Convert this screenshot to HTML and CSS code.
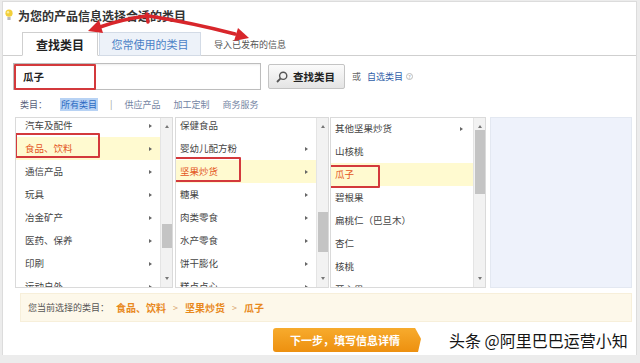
FILE: index.html
```html
<!DOCTYPE html>
<html lang="zh-CN">
<head>
    <meta charset="UTF-8">
    <title>选择类目</title>
    <link rel="stylesheet" href="styles.css">
</head>
<body>
    <div class="page">
        <h2 class="title">
            <svg class="bulb" width="8" height="12" viewBox="0 0 8 12">
                <circle cx="4" cy="4.2" r="3.6" fill="#f2cf3a"/>
                <circle cx="3" cy="3.2" r="1.2" fill="#fbeea0"/>
                <rect x="2.4" y="8" width="3.2" height="3" fill="#b9b9b9"/>
            </svg>
            为您的产品信息选择合适的类目
        </h2>

        <div class="tabs">
            <a class="tab active">查找类目</a>
            <a class="tab common">您常使用的类目</a>
            <a class="tab plain">导入已发布的信息</a>
        </div>

        <div class="search">
            <div class="input"><span class="mark mark-search">瓜子</span></div>
            <button class="find">
                <svg width="12" height="12" viewBox="0 0 12 12">
                    <circle cx="7.2" cy="4.8" r="3.6" fill="none" stroke="#555" stroke-width="1.4"/>
                    <line x1="4.6" y1="7.4" x2="1" y2="11" stroke="#555" stroke-width="1.8"/>
                </svg>
                查找类目
            </button>
            <span class="or">或</span>
            <a class="self">自选类目</a>
            <span class="help">?</span>
        </div>

        <div class="filters">
            <span>类目：</span>
            <span class="opt sel">所有类目</span>
            <span class="sep">|</span>
            <span class="opt">供应产品</span>
            <span class="opt">加工定制</span>
            <span class="opt">商务服务</span>
        </div>

        <div class="cols">
            <div class="col col-1">
                <div class="list">
                    <ul>
                        <li>汽车及配件<i></i></li>
                        <li class="on"><span class="mark mark-1">食品、饮料</span><i></i></li>
                        <li>通信产品<i></i></li>
                        <li>玩具<i></i></li>
                        <li>冶金矿产<i></i></li>
                        <li>医药、保养<i></i></li>
                        <li>印刷<i></i></li>
                        <li>运动户外<i></i></li>
                    </ul>
                </div>
                <div class="sb">
                    <b class="up"></b>
                    <div class="track"><div class="thumb thumb-1"></div></div>
                    <b class="down"></b>
                </div>
            </div>

            <div class="col col-2">
                <div class="list">
                    <ul>
                        <li>保健食品</li>
                        <li>婴幼儿配方粉<i></i></li>
                        <li class="on"><span class="mark mark-2">坚果炒货</span><i></i></li>
                        <li>糖果<i></i></li>
                        <li>肉类零食<i></i></li>
                        <li>水产零食<i></i></li>
                        <li>饼干膨化<i></i></li>
                        <li>糕点点心<i></i></li>
                    </ul>
                </div>
                <div class="sb">
                    <b class="up"></b>
                    <div class="track"><div class="thumb thumb-2"></div></div>
                    <b class="down"></b>
                </div>
            </div>

            <div class="col col-3">
                <div class="list">
                    <ul>
                        <li>其他坚果炒货<i></i></li>
                        <li>山核桃</li>
                        <li class="on"><span class="mark mark-3">瓜子</span></li>
                        <li>碧根果</li>
                        <li>扁桃仁（巴旦木）</li>
                        <li>杏仁</li>
                        <li>核桃</li>
                        <li>开心果</li>
                    </ul>
                </div>
                <div class="sb">
                    <b class="up"></b>
                    <div class="track"><div class="thumb thumb-3"></div></div>
                    <b class="down"></b>
                </div>
            </div>

            <div class="blank"></div>
        </div>

        <div class="path">
            <span class="label">您当前选择的类目：</span>
            <span class="crumb">食品、饮料</span>
            <span class="gt">&gt;</span>
            <span class="crumb">坚果炒货</span>
            <span class="gt">&gt;</span>
            <span class="crumb">瓜子</span>
        </div>

        <div class="actions">
            <button class="next">下一步，填写信息详情</button>
            <span class="watermark">头条 @阿里巴巴运营小知</span>
        </div>

        <!-- 标注箭头 -->
        <svg class="arrows" width="640" height="60" viewBox="0 0 640 60">
            <g stroke="#d8262b" stroke-width="3.5" stroke-linecap="round" fill="none">
                <path d="M146 15 Q122 18 99 26"/>
                <path d="M148 15 Q192 22 234 33"/>
                <path d="M146 13 L147 21"/>
            </g>
            <g fill="#d8262b">
                <polygon points="87,30 102,32 98,19"/>
                <polygon points="248,37 233,40 237,27"/>
            </g>
        </svg>
    </div>
</body>
</html>
```

FILE: styles.css
```css
* {
    box-sizing: border-box;
}

body {
    margin: 0;
    background: #ececec;
    font-family: "Noto Sans CJK SC", "Noto Sans", sans-serif;
    color: #333;
}

.page {
    position: relative;
    margin: 1px 3px 0 2px;
    height: 354px;
    background: #fff;
    border: 1px solid #dcdcdc;
    border-bottom: none;
}

.title {
    display: flex;
    align-items: center;
    gap: 5px;
    height: 20px;
    margin: 3px 0 0 2px;
    font-size: 12px;
    font-weight: bold;
    color: #333;
}

/* 选项卡 */
.tabs {
    display: flex;
    align-items: flex-end;
    height: 24px;
    margin-top: 7px;
    padding-left: 19px;
    border-bottom: 1px solid #cfcfcf;
}

.tab {
    display: flex;
    align-items: center;
    justify-content: center;
    height: 24px;
    margin-bottom: -1px;
    border: 1px solid #cfcfcf;
}

.tab.active {
    width: 76px;
    background: #fff;
    border-bottom-color: #fff;
    font-size: 12px;
    font-weight: bold;
    color: #222;
}

.tab.common {
    width: 102px;
    margin-left: 1px;
    background: #edf2f9;
    border-color: #d3dbe6;
    font-size: 11px;
    color: #4a7fc6;
}

.tab.plain {
    margin-left: 13px;
    border: none;
    font-size: 9px;
    color: #555;
}

/* 搜索 */
.search {
    display: flex;
    align-items: center;
    height: 27px;
    margin-top: 7px;
    padding-left: 10px;
}

.input {
    display: flex;
    align-items: center;
    width: 248px;
    height: 27px;
    padding-left: 9px;
    border: 1px solid #bdbdbd;
    box-shadow: inset 1px 1px 2px rgba(0, 0, 0, 0.08);
    font-size: 10.5px;
    font-weight: bold;
    color: #222;
}

.find {
    display: flex;
    align-items: center;
    gap: 5px;
    width: 77px;
    height: 25px;
    margin-left: 7px;
    padding: 0 0 0 7px;
    border: 1px solid #c4c4c4;
    border-radius: 2px;
    background: linear-gradient(#fbfbfb, #e4e4e4);
    font-family: inherit;
    font-size: 10.5px;
    font-weight: bold;
    color: #222;
}

.or {
    margin-left: 7px;
    font-size: 9px;
    color: #666;
}

.self {
    margin-left: 6px;
    font-size: 9px;
    color: #2f5ea8;
}

.help {
    display: inline-flex;
    align-items: center;
    justify-content: center;
    width: 7px;
    height: 7px;
    margin-left: 3px;
    border: 1px solid #bbb;
    border-radius: 50%;
    font-size: 5px;
    color: #999;
}

/* 类目筛选 */
.filters {
    display: flex;
    align-items: center;
    height: 14px;
    margin-top: 7px;
    padding-left: 17px;
    font-size: 9px;
    color: #56607a;
}

.filters .opt {
    margin-left: 13px;
    color: #7484a3;
}

.filters .sel {
    padding: 0 1px;
    background: #b7d2f4;
    color: #2d6bc2;
}

.filters .sep {
    margin-left: 12px;
    color: #999;
}

.filters .sep + .opt {
    margin-left: 12px;
}

/* 三级类目列表 */
.cols {
    display: flex;
    height: 171px;
    margin: 6px 4px 0 12px;
}

.col {
    display: flex;
    border: 1px solid #dadada;
    background: #fff;
}

.col-1 {
    width: 158px;
}

.col-2 {
    width: 154px;
    margin-left: 2px;
}

.col-3 {
    width: 156px;
    margin-left: 1px;
}

.list {
    flex: 1;
    overflow: hidden;
}

.list ul {
    margin: -4px 0 0;
    padding: 0;
    list-style: none;
}

.col-3 .list ul {
    margin-top: -1px;
}

.list li {
    display: flex;
    align-items: center;
    justify-content: space-between;
    height: 23px;
    padding: 0 8px 0 4px;
    font-size: 9.5px;
    line-height: 13px;
    color: #444;
    white-space: nowrap;
}

.col-1 .list li {
    padding-left: 9px;
}

.col-3 .list li {
    padding-right: 10px;
}

.list li i {
    width: 0;
    height: 0;
    border-left: 3px solid #666;
    border-top: 2px solid transparent;
    border-bottom: 2px solid transparent;
}

.list li.on {
    background: #fffad0;
    color: #e3561d;
}

/* 红色标注框 */
.mark {
    position: relative;
}

.mark::after {
    content: "";
    position: absolute;
    border: 2px solid #d3393c;
    border-radius: 1px;
}

.mark-search::after {
    top: -5px;
    bottom: -6px;
    left: -9px;
    right: -52px;
}

.mark-1::after {
    top: -9px;
    bottom: -3px;
    left: -10px;
    right: -27px;
}

.mark-2::after {
    top: -8px;
    bottom: -4px;
    left: -11px;
    right: -23px;
}

.mark-3::after {
    top: -3px;
    bottom: -7px;
    left: -9px;
    right: -26px;
}

/* 滚动条 */
.sb {
    display: flex;
    flex-direction: column;
    align-items: center;
    width: 12px;
    background: #f2f2f2;
    border-left: 1px solid #e4e4e4;
}

.sb .up,
.sb .down {
    width: 0;
    height: 0;
    margin: 7px 0;
    border-left: 2.5px solid transparent;
    border-right: 2.5px solid transparent;
}

.sb .up {
    border-bottom: 3px solid #777;
}

.sb .down {
    border-top: 3px solid #777;
}

.sb .track {
    flex: 1;
    width: 100%;
}

.thumb {
    width: 10px;
    margin-left: 1px;
    background: #c4c4c4;
}

.thumb-1 {
    height: 24px;
    margin-top: 89px;
}

.thumb-2 {
    height: 40px;
    margin-top: 77px;
}

.thumb-3 {
    height: 64px;
    margin-top: -5px;
}

.blank {
    flex: 1;
    margin-left: 4px;
    background: #eef2fb;
    border: 1px solid #e3e8f1;
}

/* 已选路径 */
.path {
    display: flex;
    align-items: center;
    height: 29px;
    margin: 5px 4px 0 17px;
    padding-left: 7px;
    background: #fdf8ea;
    border: 1px solid #f7efda;
    font-size: 9px;
    color: #555;
}

.path .crumb {
    font-size: 10px;
    font-weight: bold;
    color: #e8891d;
}

.path .label + .crumb {
    margin-left: 7px;
}

.path .gt {
    margin: 0 7px;
    color: #d9a46a;
}

/* 底部按钮 */
.actions {
    display: flex;
    align-items: center;
    height: 24px;
    margin-top: 6px;
    padding-left: 270px;
}

.next {
    width: 148px;
    height: 24px;
    padding: 0 4px 0 0;
    border: none;
    border-radius: 3px;
    background: linear-gradient(#f7ab2d, #ed900f);
    clip-path: polygon(0 0, 96% 0, 100% 45%, 98% 100%, 0 100%);
    font-family: inherit;
    font-size: 11px;
    font-weight: bold;
    color: #fff;
}

.watermark {
    margin-left: 28px;
    font-size: 16px;
    color: #151515;
    text-shadow: 0 0 4px #fff;
}

.arrows {
    position: absolute;
    top: -1px;
    left: -2px;
    pointer-events: none;
}
```
